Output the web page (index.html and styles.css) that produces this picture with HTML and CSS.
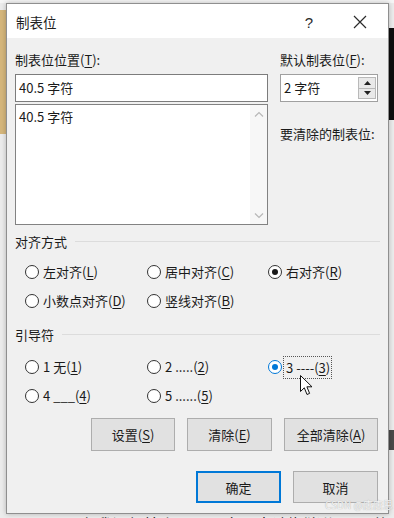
FILE: index.html
```html
<!DOCTYPE html>
<html lang="zh-CN">
<head>
<meta charset="utf-8">
<title>制表位</title>
<link rel="stylesheet" href="styles.css">
</head>
<body>
<div class="dialog">
  <div class="titlebar">
    <span class="title">制表位</span>
    <span class="help">?</span>
    <span class="close"><svg width="14" height="14" viewBox="0 0 14 14"><path d="M1 1 L13 13 M13 1 L1 13" stroke="#2b2b2b" stroke-width="1.2" fill="none"/></svg></span>
  </div>
  <div class="content">
    <div class="top">
      <div class="col-left">
        <div class="lbl">制表位位置(<u>T</u>):</div>
        <div class="textbox">40.5 字符</div>
        <div class="listbox">
          <div class="list-items"><div class="item">40.5 字符</div></div>
          <div class="vscroll">
            <svg width="10" height="7" viewBox="0 0 10 7"><path d="M1 5.5 L5 1.5 L9 5.5" fill="none" stroke="#b8b8b8" stroke-width="1.2"/></svg>
            <svg width="10" height="7" viewBox="0 0 10 7"><path d="M1 1.5 L5 5.5 L9 1.5" fill="none" stroke="#b8b8b8" stroke-width="1.2"/></svg>
          </div>
        </div>
      </div>
      <div class="col-right">
        <div class="lbl">默认制表位(<u>F</u>):</div>
        <div class="spin">
          <span class="spin-val">2 字符</span>
          <div class="spin-btns">
            <span class="sb"><svg width="7" height="4" viewBox="0 0 7 4"><path d="M0 4 L3.5 0 L7 4 Z" fill="#222"/></svg></span>
            <span class="sb"><svg width="7" height="4" viewBox="0 0 7 4"><path d="M0 0 L3.5 4 L7 0 Z" fill="#222"/></svg></span>
          </div>
        </div>
        <div class="clear-lbl">要清除的制表位:</div>
      </div>
    </div>

    <div class="group-head first"><span>对齐方式</span><i class="rule"></i></div>
    <div class="radios">
      <div class="radio"><span class="dot"></span>左对齐(<u>L</u>)</div>
      <div class="radio"><span class="dot"></span>居中对齐(<u>C</u>)</div>
      <div class="radio"><span class="dot on"></span>右对齐(<u>R</u>)</div>
      <div class="radio"><span class="dot"></span>小数点对齐(<u>D</u>)</div>
      <div class="radio"><span class="dot"></span>竖线对齐(<u>B</u>)</div>
    </div>

    <div class="group-head second"><span>引导符</span><i class="rule"></i></div>
    <div class="radios leaders">
      <div class="radio"><span class="dot"></span>1 无(<u>1</u>)</div>
      <div class="radio"><span class="dot"></span>2 .....(<u>2</u>)</div>
      <div class="radio"><span class="dot blue"></span><span class="focus">3 ----(<u>3</u>)</span></div>
      <div class="radio"><span class="dot"></span>4 ___(<u>4</u>)</div>
      <div class="radio"><span class="dot"></span>5 ......(<u>5</u>)</div>
    </div>

    <div class="actions">
      <span class="btn w84">设置(<u>S</u>)</span>
      <span class="btn w85">清除(<u>E</u>)</span>
      <span class="btn w94">全部清除(<u>A</u>)</span>
    </div>
    <div class="actions final">
      <span class="btn w85 default">确定</span>
      <span class="btn w85">取消</span>
    </div>
  </div>
</div>
<div class="doc-text">在我调朗按上下，同字是素请搬猪分(P)里的</div>
<div class="watermark">CSDN @唐唐思</div>
<svg class="cursor" width="13" height="21" viewBox="0 0 13 21"><path d="M0.5 0.5 L0.5 16.5 L4.3 12.8 L7 19.5 L9.6 18.4 L6.9 11.8 L12 11.8 Z" fill="#fff" stroke="#111" stroke-width="1" stroke-linejoin="round"/></svg>
</body>
</html>
```

FILE: styles.css
```css
html, body {
  margin: 0;
  padding: 0;
}
body {
  width: 394px;
  height: 518px;
  overflow: hidden;
  position: relative;
  font-family: "Noto Sans CJK SC", "Noto Sans", sans-serif;
  font-size: 13px;
  color: #1a1a1a;
  padding-top: 3px;
  box-sizing: border-box;
  background:
    linear-gradient(#d5b67b, #d5b67b) 0 10px / 6px 124px no-repeat,
    linear-gradient(#0e0e0e, #0e0e0e) 389px 28px / 5px 92px no-repeat,
    linear-gradient(#4a4a4a, #4a4a4a) 389px 430px / 5px 20px no-repeat,
    linear-gradient(#f6f6f6, #f6f6f6) 0 0 / 394px 3px no-repeat,
    #ececec;
}
u {
  text-decoration: underline;
  text-underline-offset: 2px;
  text-decoration-thickness: 1px;
}

.dialog {
  margin-left: 6px;
  width: 383px;
  height: 511px;
  box-sizing: border-box;
  border: 1px solid #8f8f8f;
  background: #f0f0f0;
  box-shadow: 0 0 5px rgba(0, 0, 0, 0.25);
  display: flex;
  flex-direction: column;
}

.titlebar {
  height: 34px;
  background: #fff;
  display: flex;
  align-items: center;
  padding-left: 9px;
  padding-top: 2px;
  box-sizing: border-box;
  flex: none;
}
.title {
  font-size: 13.5px;
  color: #1e1e1e;
}
.help {
  margin-left: auto;
  width: 30px;
  text-align: center;
  font-size: 15px;
  font-family: "Liberation Sans", sans-serif;
  color: #2a2a2a;
  margin-right: 13px;
}
.close {
  width: 46px;
  margin-right: 5px;
  display: flex;
  justify-content: center;
  align-items: center;
}

.content {
  padding: 13px 10px 0 8px;
  display: flex;
  flex-direction: column;
}

.top {
  display: flex;
  gap: 12px;
}
.col-left {
  width: 253px;
}
.col-right {
  width: 98px;
}
.lbl {
  line-height: 18px;
  height: 18px;
  margin-bottom: 5px;
  white-space: nowrap;
}
.textbox {
  height: 28px;
  box-sizing: border-box;
  border: 1px solid #7c7c7c;
  background: #fff;
  padding-left: 3px;
  line-height: 26px;
}
.listbox {
  margin-top: 2px;
  height: 121px;
  box-sizing: border-box;
  border: 1px solid #828282;
  background: #fff;
  display: flex;
}
.list-items {
  flex: 1;
  padding: 3px 0 0 3px;
}
.item {
  line-height: 18px;
}
.vscroll {
  width: 17px;
  background: #f7f7f7;
  display: flex;
  flex-direction: column;
  justify-content: space-between;
  align-items: center;
  padding: 6px 0 5px;
}

.spin {
  height: 28px;
  box-sizing: border-box;
  border: 1px solid #a0a0a0;
  background: #fff;
  display: flex;
  align-items: center;
  padding-left: 3px;
}
.spin-val {
  flex: 1;
  line-height: 26px;
}
.spin-btns {
  width: 18px;
  height: 22px;
  margin-right: 1px;
  display: flex;
  flex-direction: column;
}
.sb {
  flex: 1;
  border: 1px solid #b9b9b9;
  background: #e9e9e9;
  display: flex;
  align-items: center;
  justify-content: center;
}
.sb + .sb {
  border-top: none;
}
.clear-lbl {
  margin-top: 23px;
  line-height: 18px;
  white-space: nowrap;
}

.group-head {
  display: flex;
  align-items: center;
  line-height: 18px;
  margin-right: -2px;
}
.group-head span {
  margin-right: 8px;
}
.group-head .rule {
  flex: 1;
  height: 1px;
  background: #dcdcdc;
  margin-top: -1px;
}
.group-head.first {
  margin-top: 8px;
}
.group-head.second {
  margin-top: 16px;
}

.radios {
  display: grid;
  grid-template-columns: 122px 121px auto;
  row-gap: 11px;
  padding-left: 10px;
  margin-top: 12px;
}
.radios.leaders {
  margin-top: 14px;
}
.radio {
  display: flex;
  align-items: center;
  line-height: 18px;
  height: 18px;
  white-space: nowrap;
}
.dot {
  width: 14px;
  height: 14px;
  box-sizing: border-box;
  border: 1px solid #333;
  border-radius: 50%;
  background: #fff;
  margin-right: 4px;
  display: flex;
  align-items: center;
  justify-content: center;
  flex: none;
}
.dot.on::after {
  content: "";
  width: 6px;
  height: 6px;
  border-radius: 50%;
  background: #1a1a1a;
}
.dot.blue {
  border-color: #0078d7;
}
.dot.blue::after {
  content: "";
  width: 6px;
  height: 6px;
  border-radius: 50%;
  background: #0078d7;
}
.focus {
  border: 1px dotted #555;
  padding: 2px 1px 2px 2px;
  margin-left: -3px;
  line-height: 17px;
}

.actions {
  display: flex;
  justify-content: flex-end;
  gap: 12px;
  margin-top: 13px;
}
.actions.final {
  margin-top: 20px;
}
.btn {
  height: 33px;
  box-sizing: border-box;
  border: 1px solid #adadad;
  background: #e1e1e1;
  display: flex;
  align-items: center;
  justify-content: center;
  white-space: nowrap;
}
.final .btn {
  height: 32px;
}
.btn.default {
  border: 2px solid #0078d7;
}
.w84 { width: 84px; }
.w85 { width: 85px; }
.w94 { width: 94px; }

.doc-text {
  margin-left: 80px;
  margin-top: 2px;
  font-size: 16px;
  line-height: 16px;
  color: #111;
  white-space: nowrap;
}
.watermark {
  position: absolute;
  left: 325px;
  top: 498px;
  font-size: 10px;
  line-height: 13px;
  color: #f4f4f4;
  text-shadow: 0 0 1px #9a9a9a;
  white-space: nowrap;
}
.cursor {
  position: absolute;
  left: 300px;
  top: 375px;
}
```
